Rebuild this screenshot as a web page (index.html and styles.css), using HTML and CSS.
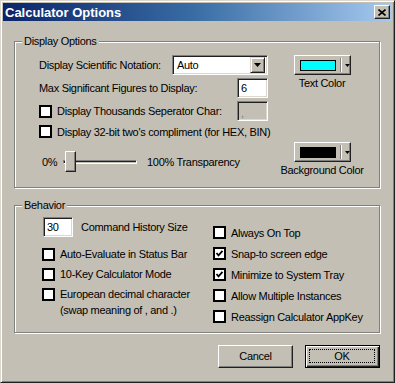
FILE: index.html
```html
<!DOCTYPE html>
<html>
<head>
<meta charset="utf-8">
<link rel="stylesheet" href="styles.css">
</head>
<body>
<div class="window">
  <div class="titlebar">
    <span class="title">Calculator Options</span>
    <span class="close"><svg width="8" height="7" viewBox="0 0 8 7"><path d="M0.5 0.5 L7.5 6.5 M7.5 0.5 L0.5 6.5" stroke="#000" stroke-width="1.6" fill="none"/></svg></span>
  </div>
  <div class="body">
    <div class="group group-display">
      <span class="group-label">Display Options</span>
      <div class="col-main">
        <div class="row">
          <span>Display Scientific Notation:</span>
          <div class="select">
            <span class="select-value">Auto</span>
            <span class="select-btn"><svg width="7" height="4" viewBox="0 0 7 4"><polygon points="0,0 7,0 3.5,4" fill="#000"/></svg></span>
          </div>
        </div>
        <div class="row">
          <span>Max Significant Figures to Display:</span>
          <div class="field field-num">6</div>
        </div>
        <div class="row">
          <span class="check"><span class="box"></span>Display Thousands Seperator Char:</span>
          <div class="field field-num field-disabled"><span class="comma">,</span></div>
        </div>
        <div class="row row-short">
          <span class="check"><span class="box"></span>Display 32-bit two's compliment (for HEX, BIN)</span>
        </div>
        <div class="slider-row">
          <span class="pct">0%</span>
          <div class="slider"><span class="track"></span><span class="thumb"></span></div>
          <span class="slider-label">100% Transparency</span>
        </div>
      </div>
      <div class="col-colors">
        <div class="color-pick">
          <div class="color-btn"><span class="swatch swatch-cyan"></span><span class="sep"></span><svg width="5" height="3" viewBox="0 0 5 3"><polygon points="0,0 5,0 2.5,3" fill="#000"/></svg></div>
          <span class="color-label">Text Color</span>
        </div>
        <div class="color-pick color-pick-bg">
          <div class="color-btn"><span class="swatch swatch-black"></span><span class="sep"></span><svg width="5" height="3" viewBox="0 0 5 3"><polygon points="0,0 5,0 2.5,3" fill="#000"/></svg></div>
          <span class="color-label">Background Color</span>
        </div>
      </div>
    </div>

    <div class="group group-behavior">
      <span class="group-label">Behavior</span>
      <div class="beh-left">
        <div class="hist-row">
          <div class="field field-hist">30</div>
          <span>Command History Size</span>
        </div>
        <div class="crow"><span class="check"><span class="box"></span>Auto-Evaluate in Status Bar</span></div>
        <div class="crow"><span class="check"><span class="box"></span>10-Key Calculator Mode</span></div>
        <div class="crow crow-multi"><span class="check"><span class="box"></span><span>European decimal character<br>(swap meaning of , and .)</span></span></div>
      </div>
      <div class="beh-right">
        <div class="rrow"><span class="check"><span class="box"></span>Always On Top</span></div>
        <div class="rrow"><span class="check"><span class="box checked"><svg width="9" height="9" viewBox="0 0 9 9"><polyline points="1.5,4 3.5,6.3 7.5,1.8" stroke="#000" stroke-width="1.8" fill="none"/></svg></span>Snap-to screen edge</span></div>
        <div class="rrow"><span class="check"><span class="box checked"><svg width="9" height="9" viewBox="0 0 9 9"><polyline points="1.5,4 3.5,6.3 7.5,1.8" stroke="#000" stroke-width="1.8" fill="none"/></svg></span>Minimize to System Tray</span></div>
        <div class="rrow"><span class="check"><span class="box"></span>Allow Multiple Instances</span></div>
        <div class="rrow"><span class="check"><span class="box"></span>Reassign Calculator AppKey</span></div>
      </div>
    </div>

    <div class="buttons">
      <div class="btn">Cancel</div>
      <div class="btn btn-default"><span class="focus">OK</span></div>
    </div>
  </div>
</div>
</body>
</html>
```
FILE: styles.css
```css
* { box-sizing: border-box; }
html, body { margin: 0; padding: 0; }
body {
  background: #C4BFB4;
  font-family: "Liberation Sans", Arial, sans-serif;
  font-size: 11px;
  letter-spacing: -0.3px;
  color: #000;
}
.window {
  width: 395px;
  height: 383px;
  background: #C4BFB4;
  border: 1px solid;
  border-color: #DCD8D0 #202020 #202020 #DCD8D0;
  box-shadow: inset 1px 1px #fff, inset -1px -1px #808080;
  padding: 2px 2px 0 2px;
}
.titlebar {
  height: 18px;
  display: flex;
  align-items: center;
  justify-content: space-between;
  background: linear-gradient(to right, #0A246A, #3A6EA5 50%, #A6CAF0);
  padding: 0 2px 0 2px;
}
.title {
  color: #fff;
  font-weight: bold;
  font-size: 13px;
  letter-spacing: 0;
}
.close {
  width: 16px;
  height: 14px;
  background: #C4BFB4;
  border: 1px solid;
  border-color: #fff #202020 #202020 #fff;
  box-shadow: inset -1px -1px #808080;
  display: flex;
  align-items: center;
  justify-content: center;
  padding-right: 1px;
}
.body {
  padding: 20px 12px 0 11px;
}
.group {
  position: relative;
  border: 1px solid #808080;
  box-shadow: inset 1px 1px #fff, 1px 1px #fff;
}
.group-label {
  position: absolute;
  top: -7px;
  left: 7px;
  line-height: 13px;
  padding: 0 2px 0 2px;
  background: #C4BFB4;
}
.group-display {
  height: 147px;
  display: flex;
  padding-top: 13px;
}
.col-main {
  margin-left: 24px;
  width: 229px;
  display: flex;
  flex-direction: column;
}
.row {
  display: flex;
  align-items: center;
  justify-content: space-between;
  height: 20px;
  margin-bottom: 3px;
  white-space: nowrap;
}
.row-short {
  height: 13px;
  margin-top: 1px;
  margin-bottom: 13px;
}
.check {
  display: flex;
  align-items: center;
  gap: 5px;
  white-space: nowrap;
}
.box {
  width: 13px;
  height: 13px;
  flex: none;
  background: #fff;
  border: 2px solid #000;
  display: flex;
  align-items: center;
  justify-content: center;
}
.field {
  background: #fff;
  border: 1px solid;
  border-color: #808080 #fff #fff #808080;
  box-shadow: inset 1px 1px #202020, inset -1px -1px #DCD8D0;
  height: 20px;
  line-height: 18px;
  padding-left: 3px;
}
.field-num { width: 31px; }
.field-disabled { background: #C4BFB4; }
.comma { color: #808080; position: relative; top: 2px; }
.select {
  width: 96px;
  height: 20px;
  background: #fff;
  border: 1px solid;
  border-color: #808080 #fff #fff #808080;
  box-shadow: inset 1px 1px #202020, inset -1px -1px #DCD8D0;
  display: flex;
  align-items: center;
  justify-content: space-between;
  padding: 2px 2px 2px 4px;
}
.select-btn {
  width: 15px;
  height: 16px;
  background: #C4BFB4;
  border: 1px solid;
  border-color: #DCD8D0 #202020 #202020 #DCD8D0;
  box-shadow: inset 1px 1px #fff, inset -1px -1px #808080;
  display: flex;
  align-items: center;
  justify-content: center;
}
.slider-row {
  display: flex;
  align-items: center;
  height: 21px;
}
.pct {
  width: 24px;
  padding-left: 3px;
}
.slider {
  position: relative;
  width: 74px;
  height: 21px;
  display: flex;
  align-items: center;
}
.track {
  width: 100%;
  height: 4px;
  border: 1px solid;
  border-color: #808080 #fff #fff #808080;
  box-shadow: inset 1px 1px #202020;
}
.thumb {
  position: absolute;
  left: 2px;
  top: 0;
  width: 11px;
  height: 21px;
  background: #C4BFB4;
  border: 1px solid;
  border-color: #fff #202020 #202020 #fff;
  box-shadow: inset -1px -1px #808080;
}
.slider-label { margin-left: 10px; white-space: nowrap; }
.col-colors {
  margin-left: 6px;
  width: 96px;
  display: flex;
  flex-direction: column;
  align-items: center;
}
.color-pick {
  display: flex;
  flex-direction: column;
  align-items: center;
}
.color-pick-bg { margin-top: 53px; }
.color-btn {
  width: 57px;
  height: 20px;
  border: 1px solid;
  border-color: #fff #202020 #202020 #fff;
  box-shadow: inset -1px -1px #808080;
  display: flex;
  align-items: center;
  padding-left: 5px;
}
.swatch {
  width: 37px;
  height: 11px;
  border: 1px solid #000;
  margin-right: 4px;
}
.swatch-cyan { background: #00FFFF; }
.swatch-black { background: #000; }
.sep {
  width: 2px;
  height: 14px;
  border-left: 1px solid #808080;
  border-right: 1px solid #fff;
  margin-right: 3px;
}
.color-label {
  margin-top: 2px;
  line-height: 12px;
  white-space: nowrap;
}
.group-behavior {
  margin-top: 17px;
  height: 128px;
  display: flex;
  padding-top: 11px;
}
.beh-left {
  margin-left: 27px;
  width: 171px;
  display: flex;
  flex-direction: column;
}
.hist-row {
  display: flex;
  align-items: center;
  height: 20px;
  margin-bottom: 7px;
  white-space: nowrap;
}
.field-hist {
  width: 30px;
  margin-left: 1px;
  margin-right: 8px;
}
.crow {
  height: 20px;
  display: flex;
  align-items: center;
}
.crow-multi {
  align-items: flex-start;
  padding-top: 2px;
  line-height: 16px;
  height: auto;
}
.crow-multi .check { align-items: flex-start; }
.crow-multi .box { margin-top: 2px; }
.beh-right {
  padding-top: 5px;
  display: flex;
  flex-direction: column;
}
.rrow {
  height: 21px;
  display: flex;
  align-items: center;
}
.buttons {
  display: flex;
  justify-content: flex-end;
  gap: 12px;
  margin-top: 12px;
  padding-right: 0;
}
.btn {
  width: 75px;
  height: 23px;
  border: 1px solid;
  border-color: #fff #202020 #202020 #fff;
  box-shadow: inset -1px -1px #808080;
  display: flex;
  align-items: center;
  justify-content: center;
  padding-bottom: 1px;
}
.btn-default {
  border: 1px solid #000;
  box-shadow: inset 1px 1px #fff, inset -1px -1px #202020, inset -2px -2px #808080;
  padding: 3px 4px 4px 3px;
}
.focus {
  flex: 1;
  height: 100%;
  border: 1px dotted #000;
  display: flex;
  align-items: center;
  justify-content: center;
}
```
